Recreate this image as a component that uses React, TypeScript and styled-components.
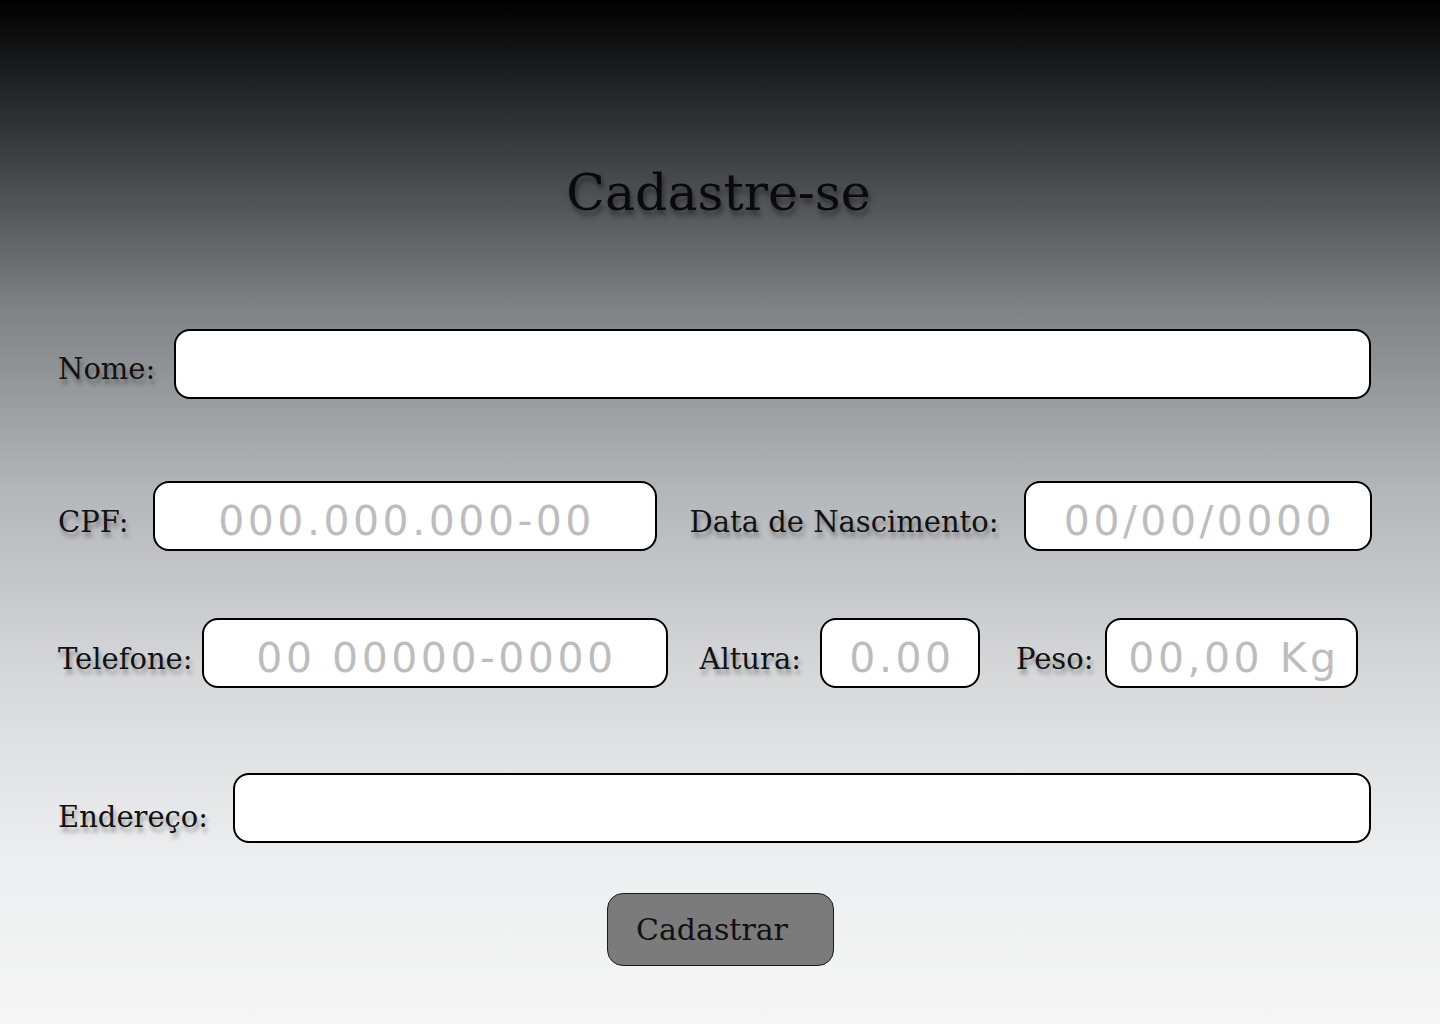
import styled, { createGlobalStyle } from 'styled-components';

const GlobalStyle = createGlobalStyle`
  * {
    box-sizing: border-box;
  }

  body {
    margin: 0;
    font-family: "DejaVu Serif", "Liberation Serif", serif;
  }
`;

export default function App() {
  return (
    <>
      <GlobalStyle />
      <Page>
        <Title>Cadastre-se</Title>
        <Form onSubmit={(e) => e.preventDefault()}>
          <Row $top={107}>
            <Label $gap={19}>Nome:</Label>
            <Input type="text" $grow />
          </Row>

          <Row $top={82}>
            <Label $gap={24} $drop={11}>CPF:</Label>
            <Input type="text" placeholder="000.000.000-00" $width={504} />
            <Label $gap={25} $space={33} $drop={11}>Data de Nascimento:</Label>
            <Input type="text" placeholder="00/00/0000" $width={348} />
          </Row>

          <Row $top={67}>
            <Label $gap={9} $drop={12}>Telefone:</Label>
            <Input type="text" placeholder="00 00000-0000" $width={466} />
            <Label $gap={19} $space={32} $drop={12}>Altura:</Label>
            <Input type="text" placeholder="0.00" $width={160} />
            <Label $gap={12} $space={36} $drop={12}>Peso:</Label>
            <Input type="text" placeholder="00,00 Kg" $width={253} />
          </Row>

          <Row $top={85}>
            <Label $gap={25} $drop={17}>Endereço:</Label>
            <Input type="text" $grow />
          </Row>

          <Actions>
            <SubmitButton type="submit">Cadastrar</SubmitButton>
          </Actions>
        </Form>
      </Page>
    </>
  );
}

const Page = styled.main`
  min-height: 1024px;
  padding: 164px 69px 0 58px;
  background: linear-gradient(
    180deg,
    #000000 0%,
    #3c3e41 15%,
    #7e8285 30%,
    #b4b7ba 48%,
    #d6d8da 66%,
    #eceeef 84%,
    #f6f6f6 100%
  );
`;

const Title = styled.h1`
  margin: 0;
  padding-left: 8px;
  text-align: center;
  font-family: "DejaVu Serif", serif;
  font-weight: 400;
  font-size: 50.5px;
  line-height: 58px;
  color: #0a0a0a;
  text-shadow: 2px 5px 5px rgba(0, 0, 0, 0.45);
`;

const Form = styled.form`
  display: flex;
  flex-direction: column;
`;

const Row = styled.div<{ $top: number }>`
  display: flex;
  align-items: center;
  margin-top: ${(p) => p.$top}px;
`;

const Label = styled.label<{ $gap: number; $space?: number; $drop?: number }>`
  flex-shrink: 0;
  padding-top: ${(p) => p.$drop ?? 9}px;
  margin-left: ${(p) => p.$space ?? 0}px;
  margin-right: ${(p) => p.$gap}px;
  font-family: "DejaVu Serif", serif;
  font-size: 29px;
  color: #111;
  text-shadow: 2px 5px 4px rgba(0, 0, 0, 0.35);
`;

const Input = styled.input<{ $width?: number; $grow?: boolean }>`
  flex: ${(p) => (p.$grow ? '1 1 auto' : `0 0 ${p.$width}px`)};
  min-width: 0;
  height: 70px;
  padding: 10px 4px 0 8px;
  border: 2px solid #000;
  border-radius: 16px;
  background: #fff;
  text-align: center;
  font-family: "DejaVu Sans", "Noto Sans", sans-serif;
  font-size: 41px;
  letter-spacing: 3.5px;
  color: #333;
  outline: none;

  &::placeholder {
    color: #bdbdbd;
  }
`;

const Actions = styled.div`
  display: flex;
  justify-content: center;
  margin-top: 50px;
  padding-left: 12px;
`;

const SubmitButton = styled.button`
  width: 227px;
  height: 73px;
  padding: 0 0 0 28px;
  text-align: left;
  border: 1px solid #1a1a1a;
  border-radius: 16px;
  background: #7b7b7b;
  font-family: "DejaVu Serif", serif;
  font-size: 30px;
  color: #111;
  cursor: pointer;
`;
